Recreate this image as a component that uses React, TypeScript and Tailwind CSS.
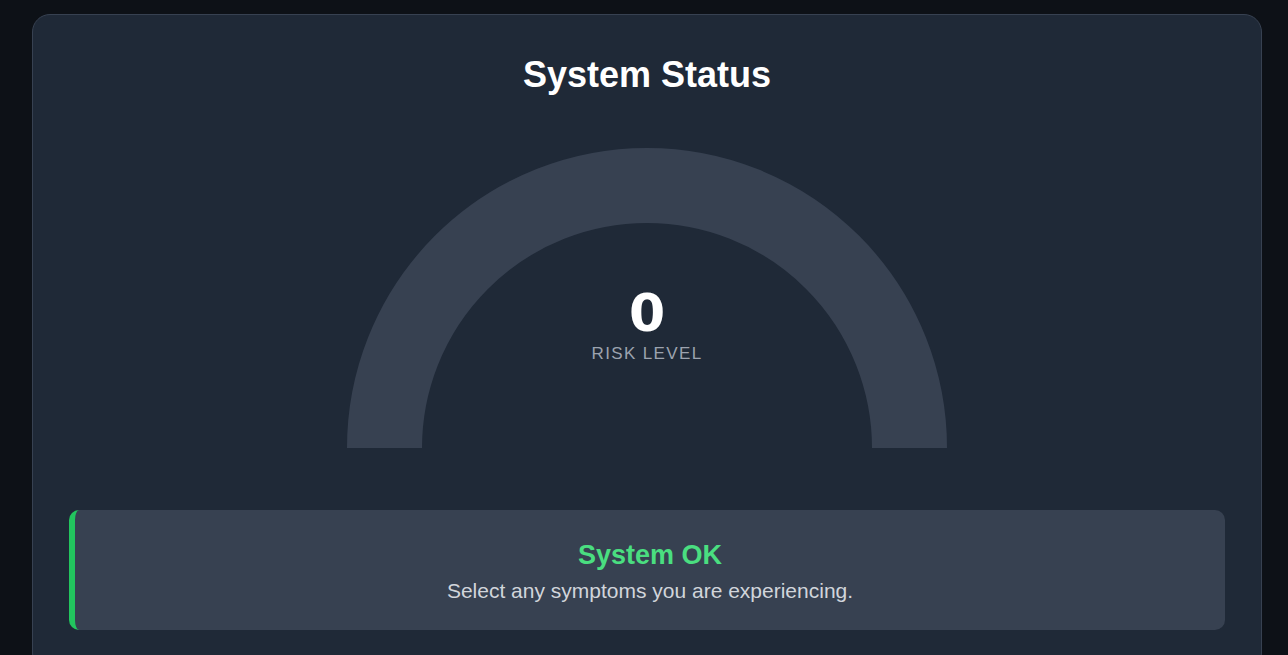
import React from "react";

export default function App() {
  return (
    <div className="min-h-screen bg-[#0d1117] pt-[14px] pl-8 font-['Liberation_Sans',Arial,sans-serif]">
      <div className="w-[1230px] rounded-[18px] border border-[#374151] bg-[#1f2937] px-[36px] pt-[40px] pb-[40px]">
        <h2 className="text-center text-[36px] leading-[40px] font-bold text-white">System Status</h2>
        <div className="relative mx-auto mt-[53px] h-[300px] w-[600px]">
          <svg width="600" height="300" viewBox="0 0 600 300" className="block">
            <path
              d="M 37.5 300 A 262.5 262.5 0 0 1 562.5 300"
              fill="none"
              stroke="#374151"
              strokeWidth="75"
            />
          </svg>
          <div className="absolute inset-x-0 top-[139px] flex flex-col items-center">
            <div className="text-[52px] leading-[52px] font-bold text-white font-['DejaVu_Sans',sans-serif]">0</div>
            <div className="mt-[3px] text-[17px] leading-[24px] uppercase tracking-[0.08em] text-[#9ca3af]">Risk Level</div>
          </div>
        </div>
        <div className="mt-[62px] rounded-[10px] border-l-[6px] border-[#22c55e] bg-[#374151] pt-[26px] pb-[24px] text-center">
          <h3 className="text-[27px] leading-[38px] font-bold text-[#4ade80]">System OK</h3>
          <p className="mt-[2px] text-[21px] leading-[30px] text-[#d1d5db]">Select any symptoms you are experiencing.</p>
        </div>
      </div>
    </div>
  );
}
